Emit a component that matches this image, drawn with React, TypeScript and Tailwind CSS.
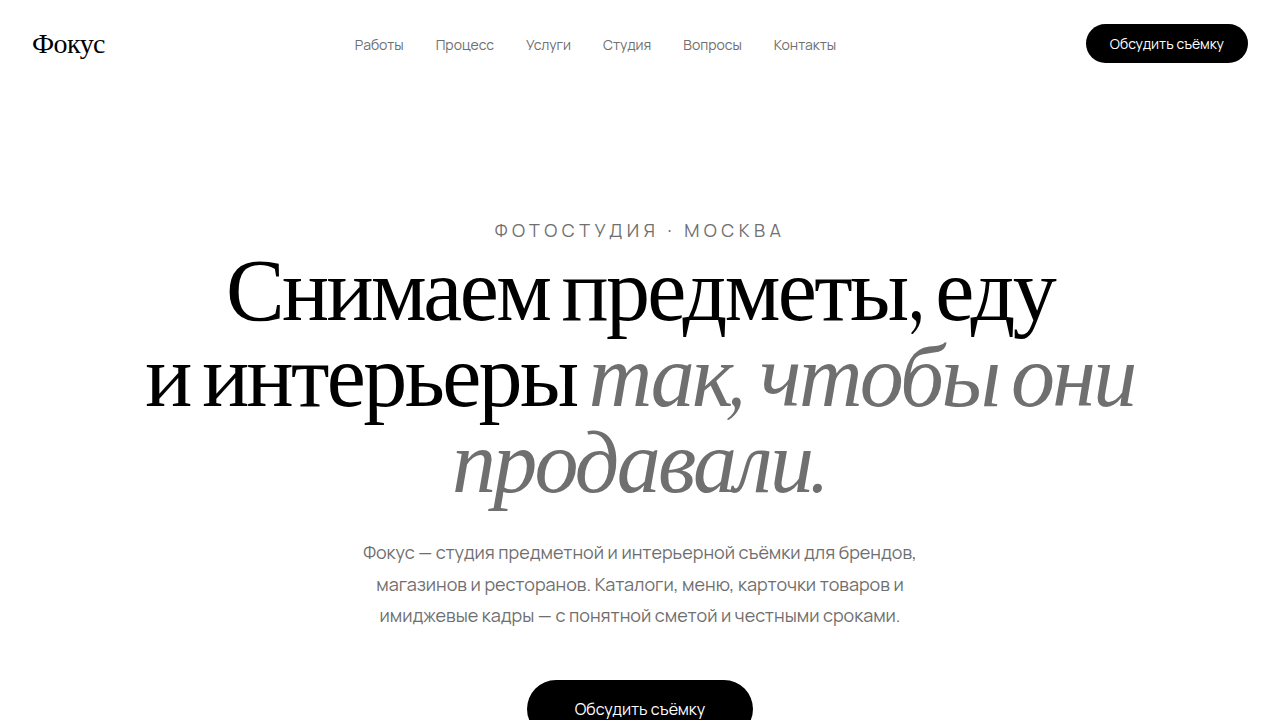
const links = [
    { label: 'Работы', href: '#works' },
    { label: 'Процесс', href: '#process' },
    { label: 'Услуги', href: '#services' },
    { label: 'Студия', href: '#studio' },
    { label: 'Вопросы', href: '#faq' },
    { label: 'Контакты', href: '#contacts' },
];

function Header() {
    return (
        <header className="flex items-center justify-between px-8 py-6">
            <a href="#top" className="font-['Instrument_Serif','Liberation_Serif',serif] text-[28px] leading-9 tracking-[-0.02em] text-black">Фокус</a>
            <nav>
                <ul className="flex gap-8 text-[#6f6f6f]">
                    {links.map((link) => (
                        <li key={link.href}>
                            <a href={link.href} className="text-sm hover:text-black">{link.label}</a>
                        </li>
                    ))}
                </ul>
            </nav>
            <a href="#contacts" className="rounded-full bg-black px-6 py-[10px] text-sm leading-[19px] text-white">Обсудить съёмку</a>
        </header>
    );
}

function Hero() {
    return (
        <section className="flex flex-col items-center px-6 pt-32 pb-40 text-center">
            <p className="text-lg leading-[30px] tracking-[0.25em] text-[#6f6f6f] uppercase">Фотостудия · Москва</p>
            <h1 className="mt-0.5 max-w-5xl font-['Instrument_Serif','Liberation_Serif',serif] text-[88px] leading-[86px] font-normal tracking-[-0.03em] text-black">
                Снимаем предметы, еду и&nbsp;интерьеры <em className="text-[#6f6f6f]">так, чтобы они продавали.</em>
            </h1>
            <p className="mt-8 max-w-xl text-lg leading-[1.75] text-[#6f6f6f]">
                Фокус — студия предметной и интерьерной съёмки для брендов, магазинов и ресторанов. Каталоги, меню, карточки товаров и имиджевые кадры — с понятной сметой и честными сроками.
            </p>
            <a href="#contacts" className="mt-12 rounded-full bg-black px-12 py-[18px] text-base leading-[22px] text-white">Обсудить съёмку</a>
        </section>
    );
}

export default function App() {
    return (
        <div id="top" className="min-h-screen bg-white font-[Manrope,Inter,sans-serif]">
            <Header />
            <main>
                <Hero />
            </main>
        </div>
    );
}
